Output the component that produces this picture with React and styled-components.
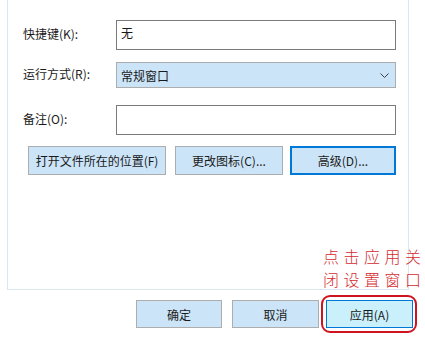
import React from 'react';
import styled, { createGlobalStyle } from 'styled-components';

const Global = createGlobalStyle`
  body {
    margin: 0;
    background: #ffffff;
    font-family: "Noto Sans CJK SC", "Noto Sans", sans-serif;
    font-size: 12px;
    color: #1a1a1a;
  }
`;

const Page = styled.div`
  width: 425px;
  height: 341px;
  overflow: hidden;
  background: #ffffff;
`;

const Panel = styled.div`
  margin-left: 7px;
  width: 402px;
  height: 290px;
  padding: 20px 0 0 15px;
  box-sizing: border-box;
  border: 1px solid #dbe7ef;
  border-top: none;
`;

const Row = styled.div`
  display: grid;
  grid-template-columns: 93px 280px;
  align-items: center;
  margin-top: ${p => p.gap || 0}px;
`;

const Label = styled.span`
  line-height: 16px;
  padding-bottom: 3px;
`;

const TextBox = styled.div`
  height: 30px;
  box-sizing: border-box;
  border: 1px solid #7a7a7a;
  background: #fff;
  padding: 3px 4px;
  line-height: 18px;
`;

const Select = styled.div`
  height: 26px;
  box-sizing: border-box;
  border: 1px solid #adadad;
  background: #cce4f7;
  display: flex;
  align-items: center;
  justify-content: space-between;
  padding: 0 6px 0 4px;
`;

const ButtonRow = styled.div`
  display: flex;
  gap: 9px;
  margin: 11px 0 0 5px;
`;

const Button = styled.div`
  width: ${p => p.w}px;
  height: ${p => p.h || 29}px;
  box-sizing: border-box;
  display: flex;
  align-items: center;
  justify-content: center;
  background: ${p => (p.applied ? '#c9f0fb' : '#cce4f7')};
  border: ${p => (p.focus ? '2px solid #0078d7' : p.applied ? '1px solid #0078d7' : '1px solid #adadad')};
  margin-left: ${p => p.ml || 0}px;
`;

const Footer = styled.div`
  display: flex;
  justify-content: flex-end;
  gap: 10px;
  padding: 10px 12px 0 0;
`;

const Marked = styled.div`
  position: relative;
  margin-left: -3px;
`;

const Ring = styled.div`
  position: absolute;
  left: -5px;
  right: -4px;
  top: -5px;
  bottom: -5px;
  border: 2px solid #d0141f;
  border-radius: 9px;
`;

const Note = styled.div`
  position: absolute;
  left: -3px;
  bottom: 37px;
  width: 110px;
  color: #d42a30;
  font-size: 16px;
  font-weight: 300;
  letter-spacing: 4.5px;
  line-height: 23px;
  white-space: nowrap;
`;

const Chevron = () => (
  <svg width="9" height="5" viewBox="0 0 9 5">
    <path d="M0.5 0.5 L4.5 4.5 L8.5 0.5" fill="none" stroke="#404040" strokeWidth="1" />
  </svg>
);

export default function App() {
  return (
    <Page>
      <Global />
      <Panel>
        <Row>
          <Label>快捷键(K):</Label>
          <TextBox>无</TextBox>
        </Row>
        <Row gap={12}>
          <Label>运行方式(R):</Label>
          <Select>
            <span>常规窗口</span>
            <Chevron />
          </Select>
        </Row>
        <Row gap={17}>
          <Label>备注(O):</Label>
          <TextBox />
        </Row>
        <ButtonRow>
          <Button w={138}>打开文件所在的位置(F)</Button>
          <Button w={108}>更改图标(C)...</Button>
          <Button w={106} focus ml={-2}>高级(D)...</Button>
        </ButtonRow>
      </Panel>
      <Footer>
        <Button w={86} h={28}>确定</Button>
        <Button w={87} h={28}>取消</Button>
        <Marked>
          <Note>
            点击应用关
            <br />
            闭设置窗口
          </Note>
          <Ring />
          <Button w={87} h={28} applied>应用(A)</Button>
        </Marked>
      </Footer>
    </Page>
  );
}
